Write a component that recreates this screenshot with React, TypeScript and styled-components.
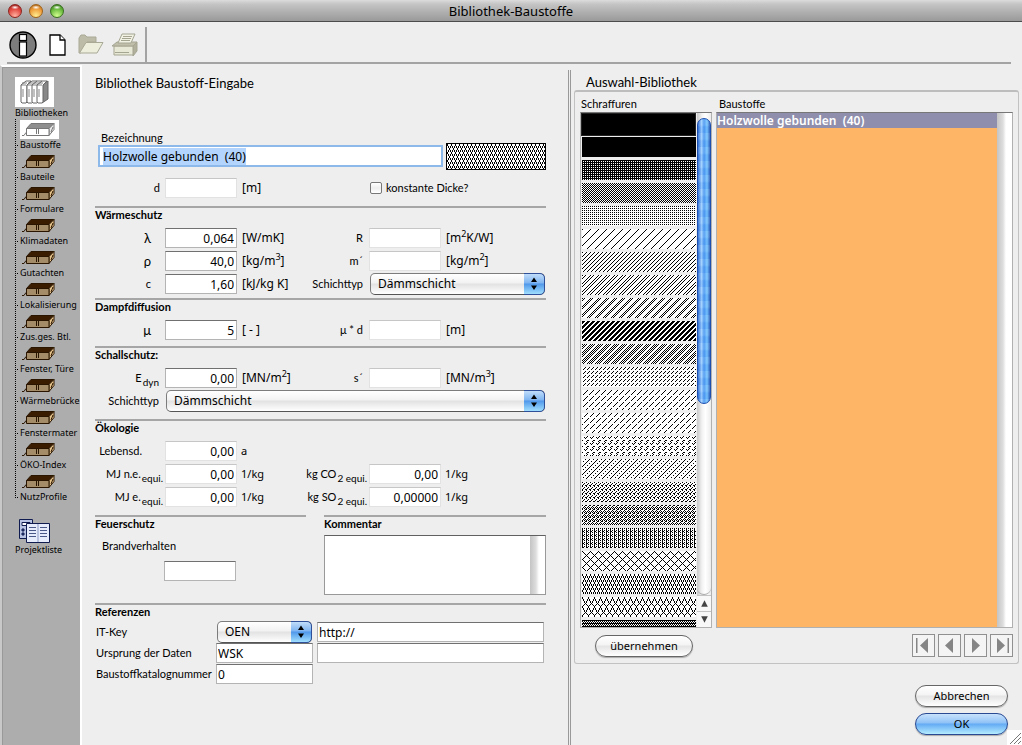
import React, { useEffect, useRef } from 'react';
import styled, { createGlobalStyle, css } from 'styled-components';

const GlobalStyle = createGlobalStyle`
  *, *::before, *::after { box-sizing: border-box; }
  body {
    margin: 0;
    background: #eee;
    color: #000;
    font: 11px/14px Lato, "Open Sans", sans-serif;
  }
  button, input, select, textarea { font: inherit; color: inherit; margin: 0; }
  ul { list-style: none; margin: 0; padding: 0; }
  h1, h2, h3, p { margin: 0; font: inherit; }
`;

const wideFont = '"Noto Sans", "Open Sans", sans-serif';

/* ---------- window ---------- */

const Window = styled.div`
  position: relative;
  display: flex;
  flex-direction: column;
  height: 100vh;
  min-height: 700px;
  background: #eee;
`;

const TitleBar = styled.header`
  display: grid;
  grid-template-columns: 72px 1fr 80px;
  align-items: center;
  height: 22px;
  flex: none;
  padding-left: 8px;
  background: linear-gradient(#dcdcdc, #c4c4c4 20%, #999);
  border-bottom: 1px solid #4c4c4c;
`;

const Lights = styled.div`
  display: flex;
  gap: 7px;
`;

const Light = styled.button<{ $dark: string; $mid: string; $glow: string }>`
  width: 14px;
  height: 14px;
  padding: 0;
  border: 1px solid ${(p) => p.$dark};
  border-radius: 50%;
  background:
    radial-gradient(ellipse 4px 2px at 50% 20%, #fff, transparent),
    radial-gradient(circle at 50% 90%, ${(p) => p.$glow}, ${(p) => p.$mid} 60%, ${(p) => p.$dark});
`;

const WindowTitle = styled.h1`
  font-family: ${wideFont};
  font-size: 13px;
  text-align: center;
`;

const Toolbar = styled.div`
  display: flex;
  align-items: center;
  gap: 7px;
  flex: none;
  height: 42px;
  margin: 0 11px 0 7px;
  padding: 5px 0 0 2px;
  border-bottom: 2px solid #a3a3a3;
`;

const ToolButton = styled.button<{ $width: number }>`
  display: flex;
  width: ${(p) => p.$width}px;
  padding: 0;
  border: 0;
  background: none;
`;

const ToolSeparator = styled.span`
  align-self: flex-end;
  width: 2px;
  height: 35px;
  background: #a3a3a3;
`;

const Body = styled.div`
  display: grid;
  grid-template-columns: 82px minmax(460px, 486fr) minmax(380px, 454fr);
  flex: 1;
  min-height: 0;
`;

/* ---------- sidebar ---------- */

const Sidebar = styled.nav`
  margin-top: 1px;
  padding: 10px 0 0 13px;
  background: #adadad;
  border: 2px solid #fff;
  border-bottom: 0;
  border-left-color: #c8c8c8;
  box-shadow: inset 1px 1px 0 #999;
  font-family: ${wideFont};
  font-size: 9px;
  line-height: 12px;
  white-space: nowrap;
`;

const SideLink = styled.a`
  display: block;
  color: #000;
  text-decoration: none;
  svg { display: block; }
`;

const Tree = styled.ul`
  background: repeating-linear-gradient(#000 0 1px, transparent 1px 2px) 0 0 / 1px calc(100% - 5px) no-repeat;
  margin-bottom: 16px;
`;

const TreeItem = styled.li`
  padding-left: 5px;
  height: 32px;
  background: repeating-linear-gradient(90deg, #000 0 1px, transparent 1px 2px) 0 26px / 4px 1px no-repeat;
`;

/* ---------- form ---------- */

const Form = styled.form`
  padding: 11px 22px 0 13px;
  min-width: 0;
`;

const FormTitle = styled.h2`
  font-size: 13px;
  line-height: 16px;
`;

const NameRow = styled.div`
  display: grid;
  grid-template-columns: 1fr 100px;
  gap: 4px;
  align-items: end;
  margin: 40px 0 8px;
  padding-left: 4px;
`;

const NameField = styled.label`
  display: flex;
  flex-direction: column;
  gap: 1px;
  padding-bottom: 4px;
  text-indent: 2px;
`;

const NameInput = styled.input`
  width: 100%;
  height: 20px;
  padding: 0 3px;
  border: 1px solid #5a8cc8;
  outline: 2px solid #8db8ea;
  outline-offset: -1px;
  background: #fff;
  font-family: ${wideFont};
  font-size: 12px;
  text-indent: 0;
  &::selection { background: #b3d5fd; color: #000; }
`;

const Swatch = styled.div`
  height: 27px;
  border: 1px solid #000;
`;

const Section = styled.section<{ $gap: number }>`
  margin-top: ${(p) => p.$gap}px;
  border-top: 2px solid #a6a6a6;
`;

const SectionTitle = styled.h3`
  margin-bottom: 6px;
  font-weight: 700;
`;

const Fields = styled.div`
  display: grid;
  grid-template-columns: 70px 72px 60px 1fr 72px 105px;
  grid-auto-rows: 20px;
  row-gap: 3px;
  align-items: center;
`;

const Label = styled.label<{ $end: number; $large?: boolean }>`
  padding-right: ${(p) => p.$end}px;
  text-align: right;
  white-space: nowrap;
  font-size: ${(p) => (p.$large ? 13 : 11)}px;
  sub { font-size: 10px; line-height: 0; vertical-align: -4px; margin-left: 1px; }
`;

const Unit = styled.span<{ $light?: boolean }>`
  padding-left: ${(p) => (p.$light ? 5 : 4)}px;
  white-space: nowrap;
  font-family: ${wideFont};
  font-size: ${(p) => (p.$light ? 12 : 11)}px;
  sup { font-size: 9px; line-height: 0; vertical-align: 5px; }
`;

const Input = styled.input<{ $soft?: boolean; $number?: boolean }>`
  width: 100%;
  min-width: 0;
  height: 20px;
  padding: 0 2px 0 1px;
  border: 1px solid ${(p) => (p.$soft ? '#e2e2e2' : '#b4b4b4')};
  border-top-color: ${(p) => (p.$soft ? '#c6c6c6' : '#707070')};
  background: #fff;
  font-family: ${wideFont};
  font-size: 12px;
  text-align: ${(p) => (p.$number ? 'right' : 'left')};
`;

const Check = styled.label`
  grid-column: 5 / 7;
  display: flex;
  align-items: center;
  gap: 4px;
  padding-left: 1px;
  white-space: nowrap;
  input {
    appearance: none;
    width: 12px;
    height: 12px;
    border: 1px solid #777;
    border-radius: 2px;
    background: linear-gradient(#fff, #eee 50%, #fff);
  }
`;

const PopupBox = styled.div<{ $columns: string }>`
  position: relative;
  grid-column: ${(p) => p.$columns};
  height: 22px;
  padding: 0 1px;
  svg { position: absolute; right: 1px; top: 0; pointer-events: none; }
`;

const PopupSelect = styled.select`
  appearance: none;
  display: block;
  width: 100%;
  height: 22px;
  padding: 0 24px 0 7px;
  border: 1px solid #7c7c7c;
  border-bottom-color: #555;
  border-radius: 5px;
  background: linear-gradient(#fff, #f2f2f2 45%, #e2e2e2 50%, #fff);
  font-family: ${wideFont};
  font-size: 12px;
`;

const SplitRow = styled.div`
  display: grid;
  grid-template-columns: 211px 1fr;
  gap: 18px;
`;

const FireClass = styled.label`
  display: flex;
  flex-direction: column;
  gap: 8px;
  padding: 2px 0 0 7px;
  input { width: 72px; margin-left: 62px; }
`;

const CommentTitle = styled(SectionTitle)`
  margin-bottom: 4px;
`;

const Comment = styled.div`
  display: grid;
  grid-template-columns: 1fr 15px;
  height: 60px;
  border: 1px solid #999;
  border-top-color: #606060;
  background: #fff;
  textarea { border: 0; padding: 2px; resize: none; background: none; outline: 0; }
`;

const Trough = styled.span`
  background: linear-gradient(90deg, #c4c4c4, #dedede 40%, #fff 60%);
`;

const References = styled.div`
  display: grid;
  grid-template-columns: 121px 97px 1fr;
  grid-auto-rows: 20px;
  gap: 1px 0;
  align-items: center;
  margin-top: -3px;
  padding-right: 2px;
  label { padding-left: 1px; white-space: nowrap; }
`;

const LinkCell = styled.div`
  padding-left: 4px;
`;

/* ---------- library ---------- */

const Library = styled.section`
  display: flex;
  flex-direction: column;
  min-width: 0;
  min-height: 0;
  margin-top: 6px;
  padding: 4px 3px 10px;
  border-left: 3px double #999;
`;

const LibraryTitle = styled.h2`
  padding-left: 12px;
  font-size: 13px;
  line-height: 16px;
`;

const LibraryBox = styled.div`
  display: flex;
  flex-direction: column;
  flex: 1;
  min-height: 0;
  padding: 5px 5px 6px;
  border: 1px solid #c2c2c2;
  border-top: 2px solid #bdbdbd;
  border-radius: 3px;
`;

const Lists = styled.div`
  display: grid;
  grid-template-columns: 132px 1fr;
  grid-template-rows: 15px minmax(0, 1fr);
  column-gap: 4px;
  flex: 1;
  min-height: 0;
`;

const ListCaption = styled.h3<{ $indent: number }>`
  padding-left: ${(p) => p.$indent}px;
`;

const ListFrame = styled.div<{ $track: number }>`
  display: grid;
  grid-template-columns: minmax(0, 1fr) ${(p) => p.$track}px;
  overflow: hidden;
  border: 1px solid #b0b0b0;
  border-top-color: #777;
`;

const Hatches = styled.ul`
  overflow: hidden;
  padding-right: 1px;
`;

const Hatch = styled.li<{ $selected?: boolean }>`
  height: 23px;
  padding: ${(p) => (p.$selected ? 0 : '1px 0 2px 1px')};
  ${(p) => p.$selected && css`background: #000; border: 1px solid #222;`}
`;

const ScrollBar = styled.div`
  display: grid;
  grid-template-rows: 286px 1fr 16px 16px;
  padding-top: 5px;
  background: linear-gradient(90deg, #c8c8c8, #f2f2f2 35%, #fff 60%, #ececec);
`;

const Thumb = styled.span`
  border: 1px solid #1c4fae;
  border-radius: 7px;
  background:
    repeating-linear-gradient(rgba(255, 255, 255, 0.08) 0 6px, rgba(20, 90, 220, 0.08) 8px 14px),
    linear-gradient(90deg, #2f6fd6, #9fd0ff 30%, #4c98f0 50%, #7cc8ff 75%, #2f60b8);
`;

const Gutter = styled.span`
  border-bottom: 1px solid #aaa;
  border-radius: 0 0 7px 7px;
`;

const ScrollButton = styled.button`
  display: grid;
  place-items: center;
  padding: 0;
  border: 0;
  border-top: 1px solid #c4c4c4;
  background: #f8f8f8;
`;

const Materials = styled.ul`
  background: #ffb566;
  overflow: hidden;
`;

const Material = styled.li`
  height: 15px;
  background: #8f8fad;
  color: #fff;
  font-family: ${wideFont};
  font-size: 12px;
  font-weight: 600;
  line-height: 15px;
  white-space: pre;
`;

const LibraryFooter = styled.div`
  display: flex;
  justify-content: space-between;
  align-items: center;
  padding: 6px 0 0 15px;
`;

const Pager = styled.div`
  display: flex;
  gap: 3px;
`;

const PagerButton = styled.button`
  display: grid;
  place-items: center;
  width: 23px;
  height: 23px;
  padding: 0;
  border: 1px solid #909090;
  background: #f4f4f4;
`;

const PushButton = styled.button<{ $primary?: boolean; $width: number }>`
  width: ${(p) => p.$width}px;
  height: 22px;
  padding: 0;
  border: 1px solid ${(p) => (p.$primary ? '#2a4a94' : '#666')};
  border-radius: 11px;
  font-family: ${wideFont};
  background: ${(p) =>
    p.$primary
      ? 'linear-gradient(#c9e2fb, #8fc2f7 45%, #62aaf4 50%, #b5ecff)'
      : 'linear-gradient(#fff, #f4f4f4 45%, #e4e4e4 50%, #fff)'};
  box-shadow: 0 1px 1px #aaa;
`;

const Actions = styled.div`
  display: flex;
  flex-direction: column;
  align-items: flex-end;
  gap: 6px;
  padding: 21px 11px 0 0;
`;

const Grip = styled.svg`
  position: absolute;
  right: 0;
  bottom: 0;
`;

/* ---------- drawings ---------- */

type Dot = (x: number, y: number) => boolean;
interface HatchSpec { w: number; h: number; dot: Dot }

const slash = (period: number, ...offsets: number[]): HatchSpec => ({
  w: period,
  h: period,
  dot: (x, y) => offsets.includes((x + y) % period),
});

const bitmap = (...rows: string[]): HatchSpec => ({
  w: rows[0].length,
  h: rows.length,
  dot: (x, y) => rows[y][x] === '#',
});

const diamonds = bitmap('#...', '#...', '.#.#', '.#.#', '..#.', '..#.', '.#.#', '.#.#');

const hatches: HatchSpec[] = [
  bitmap('#'),
  bitmap('#'),
  bitmap('##', '#.'),
  bitmap('#.', '.#'),
  bitmap('#.', '..'),
  slash(8, 0),
  slash(4, 0),
  slash(8, 0, 3),
  slash(8, 0, 2),
  slash(5, 0, 1, 2),
  slash(8, 0, 2, 4),
  bitmap('...#...#', '..#...#.', '.#...#..', '........', '...#...#', '..#...#.', '.#...#..', '........'),
  bitmap('.....#', '....#.', '...#..', '..#...', '.#....', '......'),
  bitmap('.....#', '....#.', '...#..', '..#...', '......', '#.....'),
  bitmap('.....#', '..#.#.', '...#..', '......', '#....#', '....#.'),
  bitmap('...#...#', '......#.', '.#...#..', '....#...', '...#...#', '..#.....', '.#...#..', '#.......'),
  bitmap('#...', '..#.', '.#..', '#..#'),
  bitmap('#..#', '..#.', '.#.#', '#.#.'),
  bitmap('#.#.', '#...', '#.#.', '##..'),
  { w: 8, h: 8, dot: (x, y) => (x + y) % 8 === 0 || (x - y + 8) % 8 === 0 },
  diamonds,
  bitmap('#.....', '#.....', '.#...#', '.#...#', '..#.#.', '..#.#.', '...#..', '..#.#.', '.#...#'),
  bitmap('####', '#.#.', '.#.#'),
];

const HatchDrawing = styled.svg`
  display: block;
  width: 100%;
`;

const HatchFill = ({ id, spec, height }: { id: string; spec: HatchSpec; height: number }) => {
  let d = '';
  for (let y = 0; y < spec.h; y++)
    for (let x = 0; x < spec.w; x++) if (spec.dot(x, y)) d += `M${x} ${y}h1v1h-1z`;
  return (
    <HatchDrawing height={height} shapeRendering="crispEdges" aria-hidden="true">
      <pattern id={id} width={spec.w} height={spec.h} patternUnits="userSpaceOnUse">
        <rect width={spec.w} height={spec.h} fill="#fff" />
        <path d={d} />
      </pattern>
      <rect width="100%" height={height} fill={`url(#${id})`} />
    </HatchDrawing>
  );
};

const InfoIcon = () => (
  <svg width="28" height="28" viewBox="0 0 28 28">
    <circle cx="14" cy="14" r="13" fill="#7c7c7c" stroke="#000" strokeWidth="1.4" />
    <g fill="#fff" stroke="#000" strokeWidth="1.2">
      <rect x="10.500" y="3.500" width="7" height="6" />
      <rect x="10.500" y="11" width="7" height="14" />
    </g>
  </svg>
);

const NewIcon = () => (
  <svg width="17" height="22" viewBox="0 0 17 22" fill="#fff" stroke="#000" strokeWidth="1.3">
    <path d="M1 1h10l5 5v15H1z" />
    <path d="M11 1v5h5" />
  </svg>
);

const OpenIcon = () => (
  <svg width="26" height="21" viewBox="0 0 26 21" stroke="#a9a996" fill="#bcbca8">
    <path d="M1 19V4l2-3h4l2 2h9v5H9L3 19z" />
    <path d="M1.500 19 8 8.500h17L19 19z" fill="#eeeedd" />
  </svg>
);

const PrintIcon = () => (
  <svg width="27" height="24" viewBox="0 0 27 24" stroke="#a5a592" fill="#e8e8d6">
    <path d="M22 12l4-3v9l-4 5z" fill="#b0b09c" />
    <path d="M3 13h19v9H3z" />
    <path d="M1 13l5-4h20l-4 4z" fill="#bebeaa" />
    <path d="M7 10 11 1h13l-4 9z" fill="#f1f1e4" />
    <path d="M12 3.500h9M11 5.500h9M10 7.500h9M4 19.500h14" />
  </svg>
);

const ShelfIcon = () => (
  <svg width="39" height="30" viewBox="0 0 39 30" stroke="#666" fill="#fff">
    <rect width="39" height="30" stroke="none" />
    <path d="M27 8l6-4v18l-6 4z" fill="#888" />
    {[6, 12, 17, 22].map((x) => (
      <g key={x}>
        <path d={`M${x} 8l5-4h5l-4 4v17l-1 1h-4l-1-1z`} />
        <path d={`M${x} 8h5M${x + 2} 12v8M${x + 1} 6h5`} strokeWidth="0.8" />
      </g>
    ))}
  </svg>
);

const BookIcon = ({ selected }: { selected?: boolean }) => {
  const line = selected ? '#777' : '#2a1600';
  return (
    <svg width="39" height="20" viewBox="0 0 39 20">
      {selected && <rect y="1" width="39" height="19" fill="#fff" />}
      <path d="M6.500 9.500 11 4.500h23l-5 5z" fill={selected ? '#8e8e8e' : '#3a1c00'} stroke={line} />
      <path d="M29 9.500l5-5v6l-5 6z" fill={selected ? '#eee' : '#e6c48c'} stroke={line} />
      <path d="M6.500 9.500h22.500v7H6.500z" fill={selected ? '#fff' : '#a48c68'} stroke={line} />
      <path d="M16.500 10v5M18.500 10v5M2 16.500h2l2-3M31 13l2-5" stroke={line} fill="none" />
    </svg>
  );
};

const ProjectIcon = () => (
  <svg width="36" height="25" viewBox="0 0 36 25" stroke="#101c50" fill="#b9c4e4">
    <path d="M4.500.500h13v19h-13z" />
    <path d="M7 3.500h8v3H7z" fill="#fff" />
    <path d="M7 10h2v2H7zM7 14h2v2H7z" fill="#405090" />
    <path d="M11.500 4.500h23v19h-23z" fill="#e6ecfc" />
    <path d="M14 8.500h7M14 11.500h7M14 14.500h7M14 17.500h7M25 8.500h7M25 11.500h7M25 14.500h7M25 17.500h7" stroke="#4a5888" />
    <path d="M23 5v18" stroke="#8c98c0" />
  </svg>
);

const Chevrons = () => (
  <svg width="21" height="22" viewBox="0 0 21 22">
    <defs>
      <linearGradient id="aqua" x2="0" y2="1">
        <stop offset="0" stopColor="#c4dffa" />
        <stop offset=".45" stopColor="#7fb5f2" />
        <stop offset=".5" stopColor="#5098ea" />
        <stop offset="1" stopColor="#a4e2ff" />
      </linearGradient>
    </defs>
    <path d="M0 .5h16a4.500 4.500 0 0 1 4.500 4.500v12a4.500 4.500 0 0 1-4.500 4.500H0z" fill="url(#aqua)" />
    <path d="M0 .5h16a4.500 4.500 0 0 1 4.500 4.500v12a4.500 4.500 0 0 1-4.500 4.500H0" fill="none" stroke="#2f4f98" />
    <path d="M7 9l3-4.500L13 9zM7 12.500l3 4.500 3-4.500z" />
  </svg>
);

const Triangle = ({ d, size = 15, fill = '#858585' }: { d: string; size?: number; fill?: string }) => (
  <svg width={size} height={size} viewBox="0 0 15 15" fill={fill}>
    <path d={d} />
  </svg>
);

/* ---------- content ---------- */

const treeEntries = [
  'Baustoffe', 'Bauteile', 'Formulare', 'Klimadaten', 'Gutachten', 'Lokalisierung',
  'Zus.ges. Btl.', 'Fenster, Türe', 'Wärmebrücke', 'Fenstermater', 'ÖKO-Index', 'NutzProfile',
];

const Popup = ({ id, value, columns }: { id: string; value: string; columns: string }) => (
  <PopupBox $columns={columns}>
    <PopupSelect id={id} defaultValue={value}>
      <option>{value}</option>
    </PopupSelect>
    <Chevrons />
  </PopupBox>
);

interface FieldProps {
  id: string;
  label: React.ReactNode;
  unit?: React.ReactNode;
  value?: string;
  end?: number;
  large?: boolean;
  soft?: boolean;
  plain?: boolean;
}

const Field = ({ id, label, unit, value = '', end = 6, large, soft, plain }: FieldProps) => (
  <>
    <Label htmlFor={id} $end={end} $large={large}>{label}</Label>
    <Input id={id} defaultValue={value} $soft={soft} $number />
    <Unit $light={!plain}>{unit}</Unit>
  </>
);

export default function App() {
  const nameRef = useRef<HTMLInputElement>(null);
  useEffect(() => {
    nameRef.current?.focus();
    nameRef.current?.select();
  }, []);

  return (
    <Window>
      <GlobalStyle />
      <TitleBar>
        <Lights>
          <Light aria-label="Schließen" $dark="#8c2420" $mid="#e0443c" $glow="#ffb0a0" />
          <Light aria-label="Minimieren" $dark="#a0621a" $mid="#ee9a38" $glow="#ffee90" />
          <Light aria-label="Zoomen" $dark="#3a7020" $mid="#66b83c" $glow="#d4ff90" />
        </Lights>
        <WindowTitle>Bibliothek-Baustoffe</WindowTitle>
      </TitleBar>

      <Toolbar>
        <ToolButton $width={33} aria-label="Info"><InfoIcon /></ToolButton>
        <ToolButton $width={22} aria-label="Neu"><NewIcon /></ToolButton>
        <ToolButton $width={26} aria-label="Öffnen" disabled><OpenIcon /></ToolButton>
        <ToolButton $width={27} aria-label="Drucken" disabled><PrintIcon /></ToolButton>
        <ToolSeparator />
      </Toolbar>

      <Body>
        <Sidebar>
          <SideLink href="#bibliotheken"><ShelfIcon />Bibliotheken</SideLink>
          <Tree>
            {treeEntries.map((name, i) => (
              <TreeItem key={name}>
                <SideLink href={`#${i}`}><BookIcon selected={i === 0} />{name}</SideLink>
              </TreeItem>
            ))}
          </Tree>
          <SideLink href="#projekte"><ProjectIcon />Projektliste</SideLink>
        </Sidebar>

        <Form onSubmit={(e) => e.preventDefault()}>
          <FormTitle>Bibliothek Baustoff-Eingabe</FormTitle>
          <NameRow>
            <NameField>
              Bezeichnung
              <NameInput ref={nameRef} defaultValue="Holzwolle gebunden  (40)" />
            </NameField>
            <Swatch><HatchFill id="preview" spec={diamonds} height={25} /></Swatch>
          </NameRow>
          <Fields>
            <Field id="d" label="d" unit="[m]" end={5} soft />
            <Check><input type="checkbox" />konstante Dicke?</Check>
          </Fields>

          <Section $gap={8}>
            <SectionTitle>Wärmeschutz</SectionTitle>
            <Fields>
              <Field id="lambda" label="λ" value="0,064" unit="[W/mK]" end={14} large />
              <Field id="r" label="R" unit={<>[m<sup>2</sup>K/W]</>} soft />
              <Field id="rho" label="ρ" value="40,0" unit={<>[kg/m<sup>3</sup>]</>} end={14} large />
              <Field id="m" label="m´" unit={<>[kg/m<sup>2</sup>]</>} soft />
              <Field id="c" label="c" value="1,60" unit="[kJ/kg K]" end={14} />
              <Label htmlFor="type1" $end={6}>Schichttyp</Label>
              <Popup id="type1" value="Dämmschicht" columns="5 / 7" />
            </Fields>
          </Section>

          <Section $gap={4}>
            <SectionTitle>Dampfdiffusion</SectionTitle>
            <Fields>
              <Field id="mu" label="μ" value="5" unit="[ - ]" end={14} large />
              <Field id="mud" label="μ * d" unit="[m]" soft />
            </Fields>
          </Section>

          <Section $gap={6}>
            <SectionTitle>Schallschutz:</SectionTitle>
            <Fields>
              <Field id="edyn" label={<>E<sub>dyn</sub></>} value="0,00" unit={<>[MN/m<sup>2</sup>]</>} />
              <Field id="s" label="s´" unit={<>[MN/m<sup>3</sup>]</>} soft />
              <Label htmlFor="type2" $end={6}>Schichttyp</Label>
              <Popup id="type2" value="Dämmschicht" columns="2 / 7" />
            </Fields>
          </Section>

          <Section $gap={8}>
            <SectionTitle>Ökologie</SectionTitle>
            <Fields>
              <Field id="life" label="Lebensd." value="0,00" unit="a" end={23} soft plain />
              <span />
              <span />
              <span />
              <Field id="mjne" label={<>MJ n.e.<sub>equi.</sub></>} value="0,00" unit="1/kg" end={2} soft plain />
              <Field id="co2" label={<>kg CO<sub>2 equi.</sub></>} value="0,00" unit="1/kg" end={2} soft plain />
              <Field id="mje" label={<>MJ e.<sub>equi.</sub></>} value="0,00" unit="1/kg" end={2} soft plain />
              <Field id="so2" label={<>kg SO<sub>2 equi.</sub></>} value="0,00000" unit="1/kg" end={2} soft plain />
            </Fields>
          </Section>

          <SplitRow>
            <Section $gap={8}>
              <SectionTitle>Feuerschutz</SectionTitle>
              <FireClass>Brandverhalten<Input /></FireClass>
            </Section>
            <Section $gap={8}>
              <CommentTitle>Kommentar</CommentTitle>
              <Comment><textarea aria-label="Kommentar" /><Trough /></Comment>
            </Section>
          </SplitRow>

          <Section $gap={8}>
            <SectionTitle>Referenzen</SectionTitle>
            <References>
              <label htmlFor="itkey">IT-Key</label>
              <Popup id="itkey" value="OEN" columns="2 / 3" />
              <LinkCell><Input aria-label="Link" defaultValue="http://" /></LinkCell>
              <label htmlFor="source">Ursprung der Daten</label>
              <Input id="source" defaultValue="WSK" />
              <LinkCell><Input aria-label="Zusatz" /></LinkCell>
              <label htmlFor="catalog">Baustoffkatalognummer</label>
              <Input id="catalog" defaultValue="0" />
            </References>
          </Section>
        </Form>

        <Library>
          <LibraryTitle>Auswahl-Bibliothek</LibraryTitle>
          <LibraryBox>
            <Lists>
              <ListCaption $indent={1}>Schraffuren</ListCaption>
              <ListCaption $indent={3}>Baustoffe</ListCaption>
              <ListFrame $track={14}>
                <Hatches role="listbox" aria-label="Schraffuren">
                  {hatches.map((spec, i) => (
                    <Hatch key={i} role="option" aria-selected={i === 0} $selected={i === 0}>
                      {i > 0 && <HatchFill id={`hatch-${i}`} spec={spec} height={20} />}
                    </Hatch>
                  ))}
                </Hatches>
                <ScrollBar>
                  <Thumb />
                  <Gutter />
                  <ScrollButton aria-label="Nach oben"><Triangle size={9} fill="#444" d="M2 13 7.500 2 13 13z" /></ScrollButton>
                  <ScrollButton aria-label="Nach unten"><Triangle size={9} fill="#444" d="M2 2 7.500 13 13 2z" /></ScrollButton>
                </ScrollBar>
              </ListFrame>
              <ListFrame $track={15}>
                <Materials role="listbox" aria-label="Baustoffe">
                  <Material role="option" aria-selected>{'Holzwolle gebunden  (40)'}</Material>
                </Materials>
                <Trough />
              </ListFrame>
            </Lists>
            <LibraryFooter>
              <PushButton $width={98}>übernehmen</PushButton>
              <Pager>
                <PagerButton aria-label="Erster"><Triangle d="M0 0h1.500v15H0zM12 0v15L4 7.500z" /></PagerButton>
                <PagerButton aria-label="Zurück"><Triangle d="M11 0v15L3 7.500z" /></PagerButton>
                <PagerButton aria-label="Weiter"><Triangle d="M4 0v15l8-7.500z" /></PagerButton>
                <PagerButton aria-label="Letzter"><Triangle d="M13.500 0H15v15h-1.500zM3 0v15l8-7.500z" /></PagerButton>
              </Pager>
            </LibraryFooter>
          </LibraryBox>
          <Actions>
            <PushButton $width={93}>Abbrechen</PushButton>
            <PushButton $width={93} $primary>OK</PushButton>
          </Actions>
        </Library>
      </Body>
      <Grip width="15" height="15" viewBox="0 0 15 15" stroke="#777" aria-hidden="true">
        <rect width="15" height="15" fill="#fff" stroke="none" />
        <path d="M3 14 14 3M7 14l7-7M11 14l3-3" />
      </Grip>
    </Window>
  );
}
